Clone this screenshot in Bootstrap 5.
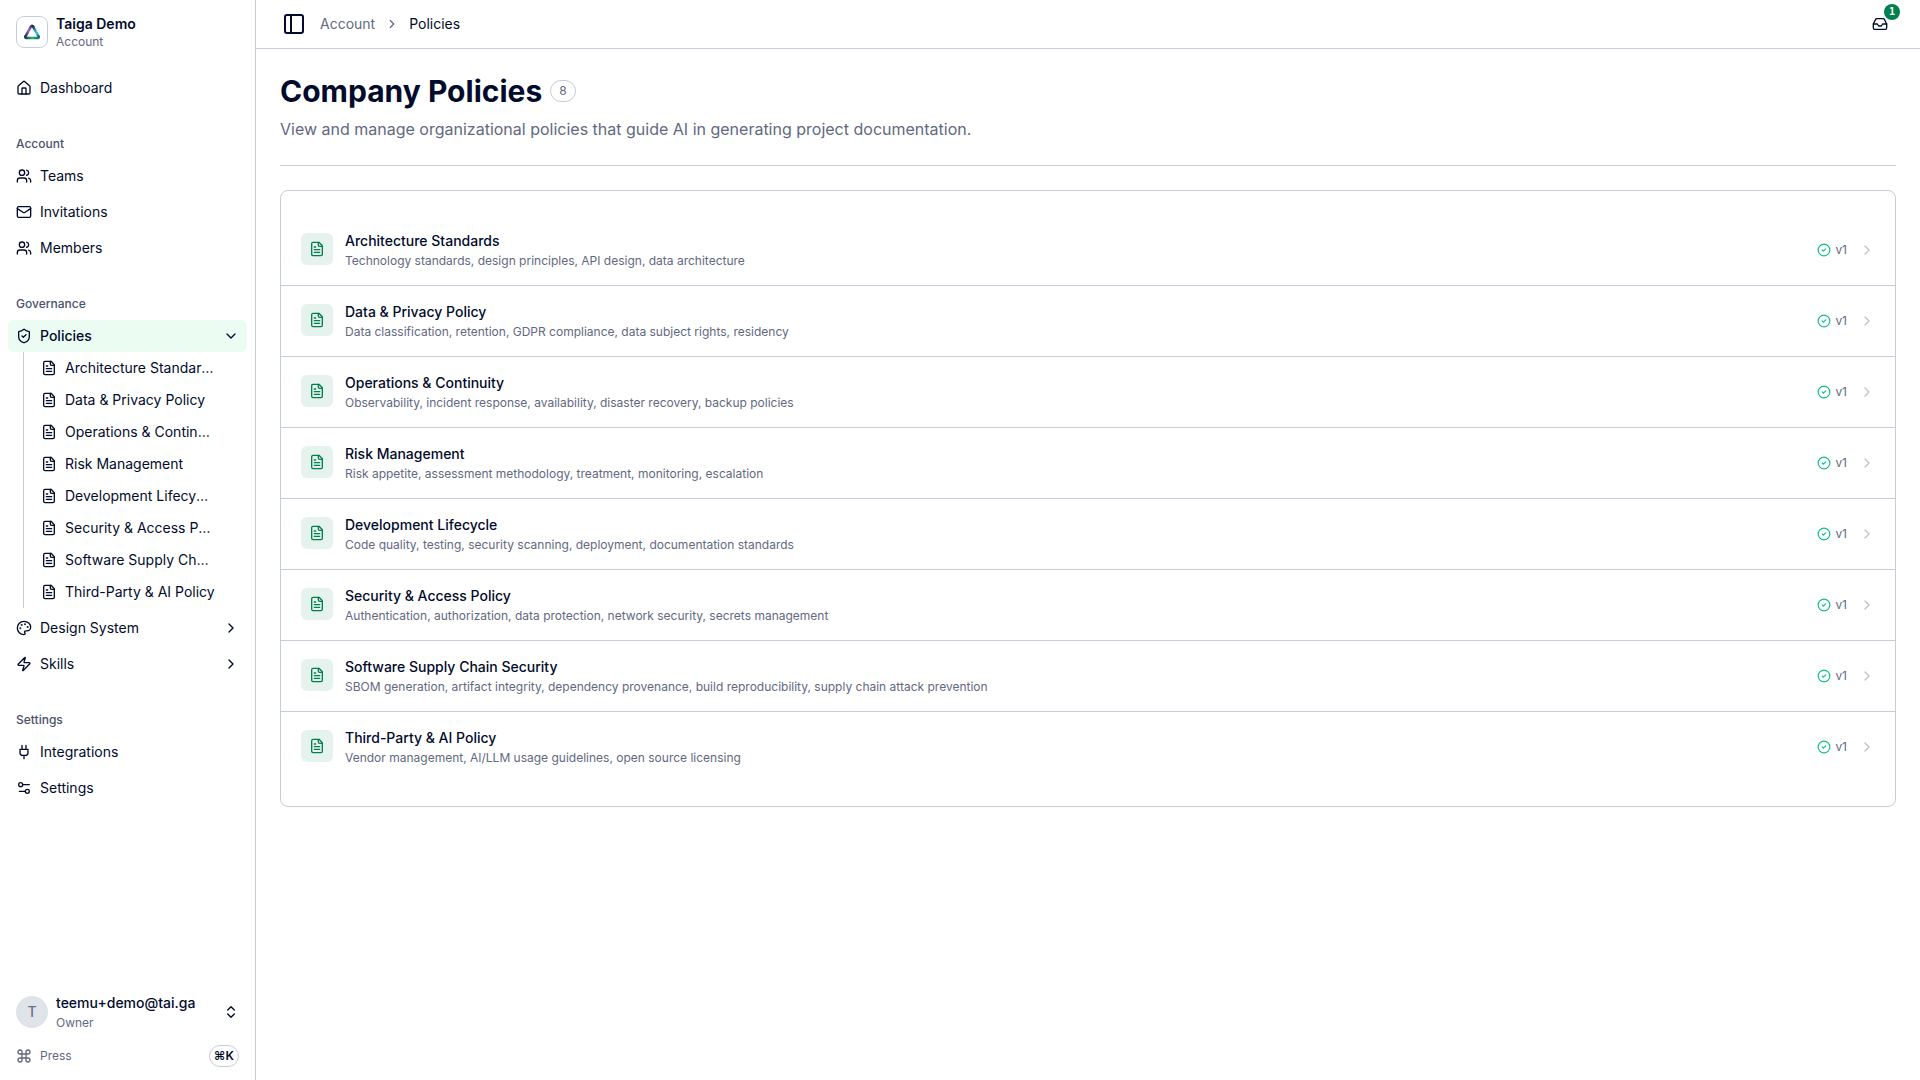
<!DOCTYPE html>
<html lang="en">
<head>
<meta charset="utf-8">
<meta name="viewport" content="width=device-width, initial-scale=1">
<title>Company Policies</title>
<link href="https://cdn.jsdelivr.net/npm/bootstrap@5.3.0/dist/css/bootstrap.min.css" rel="stylesheet">
<style>
  :root { --ink: #020b2b; --muted: #62697f; --line: #c5cdd9; --brand: #00804c; }
  body { font-family: Inter, "Liberation Sans", sans-serif; font-size: 14px; line-height: 20px; color: var(--ink); background: #fff; }
  a { color: inherit; text-decoration: none; }
  svg { flex: none; fill: none; stroke: currentColor; stroke-width: 2; stroke-linecap: round; stroke-linejoin: round; }
  .ico { width: 16px; height: 16px; }
  .ico-sm { width: 14px; height: 14px; }
  .ico-lg { width: 24px; height: 24px; }
  .caption-text { font-size: 12px; line-height: 16px; }
  .medium { font-weight: 500; }
  .sidebar { width: 256px; border-right: 1px solid var(--line); }
  .logo-box { width: 32px; height: 32px; border: 1px solid var(--line); border-radius: 8px; }
  .side-btn { height: 48px; background: none; border: 0; color: inherit; text-align: left; gap: 8px; padding: 8px; }
  .side-link { height: 32px; width: 100%; gap: 8px; padding: 0 8px; border: 0; border-radius: 6px; background: none; color: inherit; text-align: left; }
  .side-link.current { background: #ebfcf3; font-weight: 500; }
  .side-label { height: 32px; padding: 0 8px; color: #4a526b; }
  .sub-list { margin-left: 15px; padding-left: 9px; border-left: 1px solid var(--line); }
  .sub-list .side-link { padding-right: 32px; }
  .avatar { width: 32px; height: 32px; background: #dfe3ea; color: #6b7285; }
  .stack { row-gap: 2px; }
  .outline-pill { height: 22px; padding: 0 8px; border: 1px solid var(--line); border-radius: 11px; }
  .kbd-pill { padding: 0 4px; font-weight: 600; color: var(--ink); }
  .topbar { height: 49px; padding: 0 24px; border-bottom: 1px solid var(--line); }
  .bare { border: 0; padding: 0; background: none; color: inherit; }
  .toggle { width: 28px; height: 28px; margin-right: 12px; }
  .crumbs { gap: 10px; }
  .inbox { width: 32px; height: 32px; }
  .count { top: -4px; right: -4px; width: 16px; height: 16px; background: var(--brand); font: 700 10px/16px "DejaVu Sans Mono", monospace; }
  .page-title { font-size: 30px; line-height: 36px; font-weight: 700; }
  .lede { font-size: 16px; line-height: 24px; }
  .page-head { border-bottom: 1px solid var(--line); }
  .policy-list { border: 1px solid var(--line); border-radius: 8px; padding: 24px 0; }
  .policy-row { padding: 16px 20px; gap: 12px; }
  .policy-row + .policy-row { border-top: 1px solid var(--line); }
  .tile { width: 32px; height: 32px; margin-top: 2px; border-radius: 6px; background: #e5f2ed; color: var(--brand); }
  .ok { color: #10c07c; }
  .faint { color: #bfc2cb; }
  .quiet { color: var(--muted); }
</style>
</head>
<body>
<svg class="d-none" aria-hidden="true">
  <symbol id="file" viewBox="0 0 24 24"><path d="M15 2H6a2 2 0 0 0-2 2v16a2 2 0 0 0 2 2h12a2 2 0 0 0 2-2V7Z"/><path d="M14 2v4a2 2 0 0 0 2 2h4M10 9H8m8 4H8m8 4H8"/></symbol>
  <symbol id="users" viewBox="0 0 24 24"><path d="M16 21v-2a4 4 0 0 0-4-4H6a4 4 0 0 0-4 4v2"/><circle cx="9" cy="7" r="4"/><path d="M22 21v-2a4 4 0 0 0-3-3.87M16 3.130a4 4 0 0 1 0 7.750"/></symbol>
  <symbol id="right" viewBox="0 0 24 24"><path d="m9 18 6-6-6-6"/></symbol>
  <symbol id="down" viewBox="0 0 24 24"><path d="m6 9 6 6 6-6"/></symbol>
  <symbol id="check" viewBox="0 0 24 24"><circle cx="12" cy="12" r="10"/><path d="m9 12 2 2 4-4"/></symbol>
  <symbol id="home" viewBox="0 0 24 24"><path d="M15 21v-8a1 1 0 0 0-1-1h-4a1 1 0 0 0-1 1v8"/><path d="M3 10a2 2 0 0 1 .709-1.528l7-5.999a2 2 0 0 1 2.582 0l7 5.999A2 2 0 0 1 21 10v9a2 2 0 0 1-2 2H5a2 2 0 0 1-2-2z"/></symbol>
  <symbol id="mail" viewBox="0 0 24 24"><rect width="20" height="16" x="2" y="4" rx="2"/><path d="m22 7-8.97 5.7a1.94 1.94 0 0 1-2.06 0L2 7"/></symbol>
  <symbol id="shield" viewBox="0 0 24 24"><path d="M20 13c0 5-3.5 7.5-7.66 8.95a1 1 0 0 1-.67-.01C7.5 20.5 4 18 4 13V6a1 1 0 0 1 1-1c2 0 4.5-1.2 6.24-2.72a1.17 1.17 0 0 1 1.52 0C14.51 3.81 17 5 19 5a1 1 0 0 1 1 1z"/><path d="m9 12 2 2 4-4"/></symbol>
  <symbol id="palette" viewBox="0 0 24 24"><g fill="currentColor"><circle cx="13.5" cy="6.5" r=".5"/><circle cx="17.5" cy="10.5" r=".5"/><circle cx="8.5" cy="7.5" r=".5"/><circle cx="6.5" cy="12.5" r=".5"/></g><path d="M12 2C6.5 2 2 6.5 2 12s4.5 10 10 10c.926 0 1.648-.746 1.648-1.688 0-.437-.18-.835-.437-1.125-.29-.289-.438-.652-.438-1.125a1.64 1.64 0 0 1 1.668-1.668h1.996c3.051 0 5.555-2.503 5.555-5.554C21.965 6.012 17.461 2 12 2z"/></symbol>
  <symbol id="zap" viewBox="0 0 24 24"><path d="M4 14a1 1 0 0 1-.78-1.63l9.9-10.2a.5.5 0 0 1 .86.46l-1.92 6.02A1 1 0 0 0 13 10h7a1 1 0 0 1 .78 1.63l-9.9 10.2a.5.5 0 0 1-.86-.46l1.92-6.02A1 1 0 0 0 11 14z"/></symbol>
  <symbol id="plug" viewBox="0 0 24 24"><path d="M12 22v-5M9 8V2m6 6V2m3 6v5a4 4 0 0 1-4 4h-4a4 4 0 0 1-4-4V8Z"/></symbol>
  <symbol id="sliders" viewBox="0 0 24 24"><path d="M20 7h-9m3 10H5"/><circle cx="17" cy="17" r="3"/><circle cx="7" cy="7" r="3"/></symbol>
  <symbol id="updown" viewBox="0 0 24 24"><path d="m7 15 5 5 5-5M7 9l5-5 5 5"/></symbol>
  <symbol id="command" viewBox="0 0 24 24"><path d="M15 6v12a3 3 0 1 0 3-3H6a3 3 0 1 0 3 3V6a3 3 0 1 0-3 3h12a3 3 0 1 0-3-3"/></symbol>
  <symbol id="panel" viewBox="0 0 24 24"><rect width="18" height="18" x="3" y="3" rx="2"/><path d="M9 3v18"/></symbol>
  <symbol id="tray" viewBox="0 0 24 24"><path d="M22 12h-6l-2 3h-4l-2-3H2"/><path d="M5.450 5.110 2 12v6a2 2 0 0 0 2 2h16a2 2 0 0 0 2-2v-6l-3.450-6.890A2 2 0 0 0 16.760 4H7.240a2 2 0 0 0-1.790 1.110z"/></symbol>
</svg>

<div class="d-flex min-vh-100">
  <aside class="sidebar d-flex flex-column flex-shrink-0 p-2">
    <button class="side-btn d-flex align-items-center w-100" type="button">
      <span class="logo-box d-flex align-items-center justify-content-center">
        <svg width="18" height="18" viewBox="0 0 18 18" aria-hidden="true">
          <defs>
            <linearGradient id="gl" x1="0" y1="1" x2="1" y2="0"><stop offset="0" stop-color="#2a2350"/><stop offset=".5" stop-color="#8a6be0"/><stop offset="1" stop-color="#2a2452"/></linearGradient>
            <linearGradient id="gr" x1="0" y1="0" x2="1" y2="1"><stop offset="0" stop-color="#27305a"/><stop offset=".6" stop-color="#2fd3e0"/><stop offset="1" stop-color="#1a7f8c"/></linearGradient>
            <linearGradient id="gb" x1="0" y1="0" x2="1" y2="0"><stop offset="0" stop-color="#173b48"/><stop offset=".5" stop-color="#25b377"/><stop offset="1" stop-color="#137064"/></linearGradient>
          </defs>
          <path d="M2.500 13.500 7.700 3.800Q9 1.600 10.300 3.800" stroke="url(#gl)" stroke-width="2.600"/>
          <path d="M10 3.400 15.500 13.500" stroke="url(#gr)" stroke-width="2.600"/>
          <path d="M2.300 13.600Q2 15 4 15H14Q16 15 15.700 13.600" stroke="url(#gb)" stroke-width="2.600"/>
        </svg>
      </span>
      <span class="d-flex flex-column"><span class="fw-semibold">Taiga Demo</span><span class="caption-text quiet">Account</span></span>
    </button>

    <nav class="d-flex flex-column flex-grow-1 gap-4 pt-3" aria-label="Main">
      <a class="side-link d-flex align-items-center" href="#"><svg class="ico"><use href="#home"/></svg>Dashboard</a>

      <div class="d-flex flex-column">
        <div class="side-label caption-text medium d-flex align-items-center">Account</div>
        <div class="d-flex flex-column gap-1">
          <a class="side-link d-flex align-items-center" href="#"><svg class="ico"><use href="#users"/></svg>Teams</a>
          <a class="side-link d-flex align-items-center" href="#"><svg class="ico"><use href="#mail"/></svg>Invitations</a>
          <a class="side-link d-flex align-items-center" href="#"><svg class="ico"><use href="#users"/></svg>Members</a>
        </div>
      </div>

      <div class="d-flex flex-column">
        <div class="side-label caption-text medium d-flex align-items-center">Governance</div>
        <div class="d-flex flex-column gap-1">
          <div>
            <button class="side-link current d-flex align-items-center" type="button" aria-expanded="true"><svg class="ico"><use href="#shield"/></svg><span class="flex-grow-1">Policies</span><svg class="ico"><use href="#down"/></svg></button>
            <div class="sub-list">
              <a class="side-link d-flex align-items-center" href="#"><svg class="ico"><use href="#file"/></svg><span class="text-truncate">Architecture Standards</span></a>
              <a class="side-link d-flex align-items-center" href="#"><svg class="ico"><use href="#file"/></svg><span class="text-truncate">Data &amp; Privacy Policy</span></a>
              <a class="side-link d-flex align-items-center" href="#"><svg class="ico"><use href="#file"/></svg><span class="text-truncate">Operations &amp; Continuity</span></a>
              <a class="side-link d-flex align-items-center" href="#"><svg class="ico"><use href="#file"/></svg><span class="text-truncate">Risk Management</span></a>
              <a class="side-link d-flex align-items-center" href="#"><svg class="ico"><use href="#file"/></svg><span class="text-truncate">Development Lifecycle</span></a>
              <a class="side-link d-flex align-items-center" href="#"><svg class="ico"><use href="#file"/></svg><span class="text-truncate">Security &amp; Access Policy</span></a>
              <a class="side-link d-flex align-items-center" href="#"><svg class="ico"><use href="#file"/></svg><span class="text-truncate">Software Supply Chain Security</span></a>
              <a class="side-link d-flex align-items-center" href="#"><svg class="ico"><use href="#file"/></svg><span class="text-truncate">Third-Party &amp; AI Policy</span></a>
            </div>
          </div>
          <button class="side-link d-flex align-items-center" type="button" aria-expanded="false"><svg class="ico"><use href="#palette"/></svg><span class="flex-grow-1">Design System</span><svg class="ico"><use href="#right"/></svg></button>
          <button class="side-link d-flex align-items-center" type="button" aria-expanded="false"><svg class="ico"><use href="#zap"/></svg><span class="flex-grow-1">Skills</span><svg class="ico"><use href="#right"/></svg></button>
        </div>
      </div>

      <div class="d-flex flex-column">
        <div class="side-label caption-text medium d-flex align-items-center">Settings</div>
        <div class="d-flex flex-column gap-1">
          <a class="side-link d-flex align-items-center" href="#"><svg class="ico"><use href="#plug"/></svg>Integrations</a>
          <a class="side-link d-flex align-items-center" href="#"><svg class="ico"><use href="#sliders"/></svg>Settings</a>
        </div>
      </div>
    </nav>

    <div class="d-flex flex-column gap-1">
      <button class="side-btn d-flex align-items-center w-100" type="button">
        <span class="avatar rounded-circle d-flex align-items-center justify-content-center medium">T</span>
        <span class="stack d-flex flex-column flex-grow-1"><span class="medium">teemu+demo@tai.ga</span><span class="caption-text quiet">Owner</span></span>
        <svg class="ico"><use href="#updown"/></svg>
      </button>
      <button class="side-link quiet caption-text d-flex align-items-center" type="button"><svg class="ico"><use href="#command"/></svg><span class="flex-grow-1">Press</span><span class="outline-pill kbd-pill d-flex align-items-center">⌘K</span></button>
    </div>
  </aside>

  <div class="flex-grow-1">
    <header class="topbar d-flex align-items-center justify-content-between">
      <div class="d-flex align-items-center">
        <button class="bare toggle d-flex align-items-center justify-content-center" type="button" aria-label="Toggle sidebar"><svg class="ico-lg"><use href="#panel"/></svg></button>
        <nav class="crumbs d-flex align-items-center" aria-label="Breadcrumb"><a class="quiet" href="#">Account</a><svg class="ico-sm quiet"><use href="#right"/></svg><span>Policies</span></nav>
      </div>
      <button class="bare inbox position-relative d-flex align-items-center justify-content-center" type="button" aria-label="Inbox"><svg class="ico"><use href="#tray"/></svg><span class="count position-absolute rounded-circle text-white text-center">1</span></button>
    </header>

    <main class="p-4">
      <div class="page-head pb-4 mb-4">
        <div class="d-flex align-items-center gap-2">
          <h1 class="page-title mb-0">Company Policies</h1>
          <span class="outline-pill caption-text quiet d-flex align-items-center">8</span>
        </div>
        <p class="lede quiet mt-2 mb-0">View and manage organizational policies that guide AI in generating project documentation.</p>
      </div>

      <div class="policy-list" id="policies"></div>
    </main>
  </div>
</div>

<script src="https://cdn.jsdelivr.net/npm/bootstrap@5.3.0/dist/js/bootstrap.bundle.min.js"></script>
<script>
  const policies = [
    ["Architecture Standards", "Technology standards, design principles, API design, data architecture"],
    ["Data & Privacy Policy", "Data classification, retention, GDPR compliance, data subject rights, residency"],
    ["Operations & Continuity", "Observability, incident response, availability, disaster recovery, backup policies"],
    ["Risk Management", "Risk appetite, assessment methodology, treatment, monitoring, escalation"],
    ["Development Lifecycle", "Code quality, testing, security scanning, deployment, documentation standards"],
    ["Security & Access Policy", "Authentication, authorization, data protection, network security, secrets management"],
    ["Software Supply Chain Security", "SBOM generation, artifact integrity, dependency provenance, build reproducibility, supply chain attack prevention"],
    ["Third-Party & AI Policy", "Vendor management, AI/LLM usage guidelines, open source licensing"]
  ];
  const esc = s => s.replace(/&/g, "&amp;");
  document.getElementById("policies").innerHTML = policies.map(([name, about]) => `
    <a class="policy-row d-flex align-items-center" href="#">
      <span class="tile d-flex align-items-center justify-content-center align-self-start"><svg class="ico"><use href="#file"/></svg></span>
      <span class="stack d-flex flex-column flex-grow-1"><span class="medium">${esc(name)}</span><span class="caption-text quiet">${esc(about)}</span></span>
      <span class="caption-text quiet d-flex align-items-center gap-1"><svg class="ico-sm ok"><use href="#check"/></svg>v1</span>
      <svg class="ico faint"><use href="#right"/></svg>
    </a>`).join("");
</script>
</body>
</html>
